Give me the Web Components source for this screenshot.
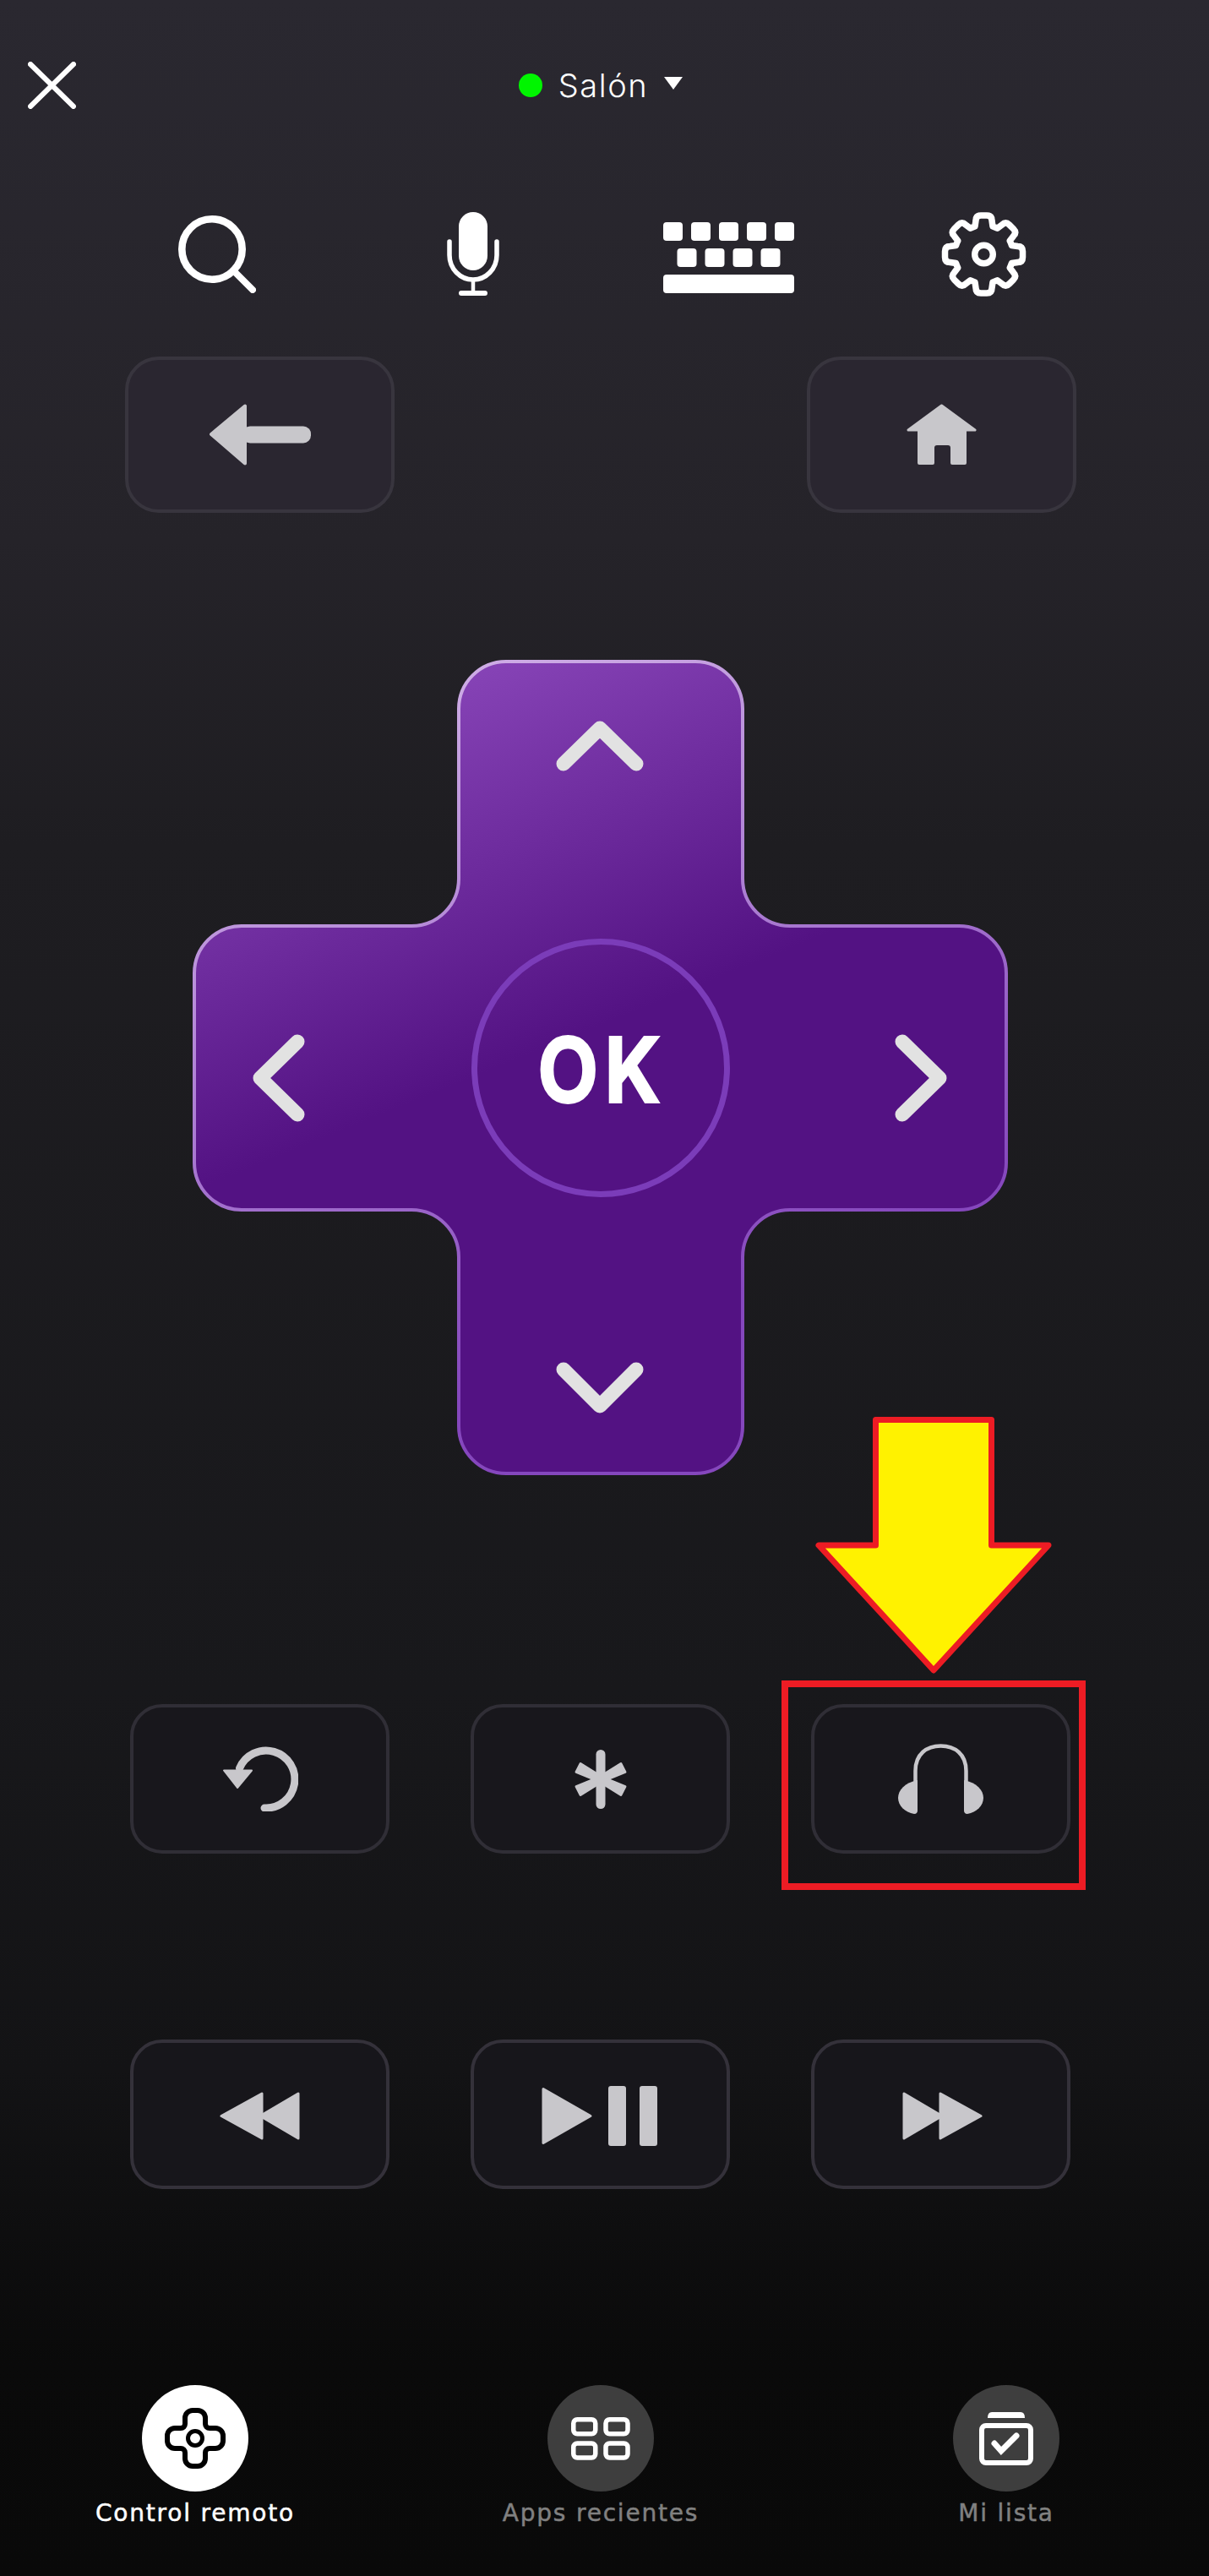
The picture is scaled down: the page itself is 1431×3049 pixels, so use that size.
<!DOCTYPE html>
<html lang="es">
<head>
<meta charset="utf-8">
<title>Control remoto</title>
<style>
  html, body { margin: 0; padding: 0; }
  body {
    width: 1431px;
    height: 3049px;
    position: relative;
    overflow: hidden;
    font-family: "Inter", "Liberation Sans", sans-serif;
    background: linear-gradient(180deg, #2a2830 0, #252329 640px, #1e1d21 1000px, #18181b 2000px, #131315 2450px, #0a0a0a 2800px, #090909 3049px);
  }
</style>
</head>
<body>
  <top-bar device="Salón"></top-bar>

  <quick-actions>
    <remote-icon name="search"></remote-icon>
    <remote-icon name="mic" style="margin-left:226px"></remote-icon>
    <remote-icon name="keyboard" style="margin-left:194px;margin-top:-3px"></remote-icon>
    <remote-icon name="gear" style="margin-left:174px"></remote-icon>
  </quick-actions>

  <nav-keys>
    <key-button tall><remote-icon name="back"></remote-icon></key-button>
    <key-button tall><remote-icon name="home"></remote-icon></key-button>
  </nav-keys>

  <d-pad></d-pad>

  <key-grid>
    <key-button><remote-icon name="replay"></remote-icon></key-button>
    <key-button><remote-icon name="star"></remote-icon></key-button>
    <key-button><remote-icon name="headphones"></remote-icon></key-button>
    <key-button media><remote-icon name="rewind"></remote-icon></key-button>
    <key-button media><remote-icon name="playpause" style="margin-right:2px"></remote-icon></key-button>
    <key-button media><remote-icon name="forward" style="margin-left:3px"></remote-icon></key-button>
  </key-grid>

  <tab-bar>
    <tab-item active icon="tabdpad">Control remoto</tab-item>
    <tab-item icon="apps">Apps recientes</tab-item>
    <tab-item icon="mylist">Mi lista</tab-item>
  </tab-bar>

  <call-out></call-out>

<script>
// builds the outline of the settings gear, 8 teeth with rounded tips
function gearPath() {
  const cx = 50.5, cy = 50;
  const pt = (a, u, v) => {
    const x = cx + u * Math.cos(a) + v * Math.sin(a);
    const y = cy + u * Math.sin(a) - v * Math.cos(a);
    return x.toFixed(2) + ' ' + y.toFixed(2);
  };
  let d = '';
  for (let i = 0; i < 8; i++) {
    const a = i * Math.PI / 4;
    d += (i === 0 ? 'M' : 'A34 34 0 0 1 ') + pt(a, -10.5, 33);
    d += 'L' + pt(a, -9.5, 40) + 'Q' + pt(a, -9.5, 46) + ' ' + pt(a, -3.5, 46);
    d += 'L' + pt(a, 3.5, 46) + 'Q' + pt(a, 9.5, 46) + ' ' + pt(a, 9.5, 40);
    d += 'L' + pt(a, 10.5, 33);
  }
  return d + 'A34 34 0 0 1 ' + pt(0, -10.5, 33) + 'Z';
}

const keyRects = [
  [0, 10], [33, 10], [66, 10], [99, 10], [132, 10],
  [16.5, 41], [49.5, 41], [82.5, 41], [115.5, 41]
].map(k => `<rect x="${k[0]}" y="${k[1]}" width="23" height="22" rx="4"/>`).join('');

// the four flared arms of the star key
const starSpokes = [27, 153, 207, 333]
  .map(r => `<path transform="translate(31 35) rotate(${r})" d="M0 -3L29.7 -5.5V5.5L0 3Z"/>`).join('');

const ICONS = {
  close: [57, 56, `<path d="M3 3L54 53M54 3L3 53" fill="none" stroke="#fff" stroke-width="6" stroke-linecap="round"/>`],
  search: [92, 92, `<circle cx="40" cy="40" r="35.7" fill="none" stroke="#fff" stroke-width="8.6"/><path d="M65 65L88 88" stroke="#fff" stroke-width="8" stroke-linecap="round"/>`],
  mic: [62, 100, `<rect x="14" y="0" width="34" height="69" rx="17" fill="#fff"/><path d="M3 35V51A28 29 0 0 0 59 51V35" fill="none" stroke="#fff" stroke-width="5.5" stroke-linecap="round"/><path d="M31 80V95" stroke="#fff" stroke-width="4.5"/><rect x="14" y="93" width="34" height="6" rx="3" fill="#fff"/>`],
  keyboard: [155, 94, `<g fill="#fff">${keyRects}<rect x="0" y="72" width="155" height="22" rx="4"/></g>`],
  gear: [101, 100, `<path d="${gearPath()}" fill="none" stroke="#fff" stroke-width="7.5" stroke-linejoin="round"/><circle cx="50.5" cy="50" r="10.8" fill="none" stroke="#fff" stroke-width="7.4"/>`],
  back: [121, 73, `<g fill="#c8c7cb"><path d="M3 36L43 2.5V70.5Z" stroke="#c8c7cb" stroke-width="4" stroke-linejoin="round"/><rect x="40" y="26.5" width="81" height="20" rx="9"/></g>`],
  home: [83, 73, `<g fill="#c8c7cb"><path d="M41.5 2L81 31H2Z" stroke="#c8c7cb" stroke-width="3" stroke-linejoin="round"/><path fill-rule="evenodd" d="M13 30H71V70Q71 72 69 72H54Q52 72 52 70V52Q52 49 49 49H36Q33 49 33 52V70Q33 72 31 72H15Q13 72 13 70Z"/></g>`],
  replay: [90, 77, `<path d="M20.5 26A34 34 0 1 1 50 73" fill="none" stroke="#c8c7cb" stroke-width="9" stroke-linecap="round"/><path d="M2 28.5H35L18 49Z" fill="#c8c7cb" stroke="#c8c7cb" stroke-width="2" stroke-linejoin="round"/>`],
  star: [62, 70, `<path d="M31 5.5V64.5" stroke="#c8c7cb" stroke-width="11" stroke-linecap="round"/><g fill="#c8c7cb" stroke="#c8c7cb" stroke-width="3" stroke-linejoin="round">${starSpokes}</g>`],
  headphones: [101, 83, `<path d="M20.5 45V32C20.5 12 34 2.5 50.5 2.5S80.5 12 80.5 32V45" fill="none" stroke="#c8c7cb" stroke-width="4.5"/><g fill="#c8c7cb"><path d="M23 43C8 46 0 55 0 64S8 81 19 83C22 83 23 81 23 79Z"/><path d="M78 43C93 46 101 55 101 64S93 81 82 83C79 83 78 81 78 79Z"/></g>`],
  rewind: [95, 57, `<g fill="#c8c7cb" stroke="#c8c7cb" stroke-width="3" stroke-linejoin="round"><path d="M2 28.5L50 2V55Z"/><path d="M48 28.5L93 2V55Z"/></g>`],
  playpause: [137, 71, `<g fill="#c8c7cb"><path d="M2 3.5L58 35.5L2 67.5Z" stroke="#c8c7cb" stroke-width="3" stroke-linejoin="round"/><rect x="79" y="0" width="21" height="71" rx="3"/><rect x="116" y="0" width="21" height="71" rx="3"/></g>`],
  forward: [95, 57, `<g fill="#c8c7cb" stroke="#c8c7cb" stroke-width="3" stroke-linejoin="round"><path d="M93 28.5L45 2V55Z"/><path d="M47 28.5L2 2V55Z"/></g>`],
  tabdpad: [72, 72, `<path d="M24 12A9 9 0 0 1 33 3H39A9 9 0 0 1 48 12V19A5 5 0 0 0 53 24H60A9 9 0 0 1 69 33V39A9 9 0 0 1 60 48H53A5 5 0 0 0 48 53V60A9 9 0 0 1 39 69H33A9 9 0 0 1 24 60V53A5 5 0 0 0 19 48H12A9 9 0 0 1 3 39V33A9 9 0 0 1 12 24H19A5 5 0 0 0 24 19Z" fill="none" stroke="#000" stroke-width="6"/><circle cx="36" cy="36" r="8.5" fill="none" stroke="#000" stroke-width="5"/>`],
  apps: [70, 51, `<g fill="none" stroke="#fff" stroke-width="5.5"><rect x="2.75" y="2.75" width="26" height="17" rx="4.5"/><rect x="41" y="2.75" width="26" height="17" rx="4.5"/><rect x="2.75" y="31" width="26" height="17" rx="4.5"/><rect x="41" y="31" width="26" height="17" rx="4.5"/></g>`],
  mylist: [64, 63, `<path d="M10 7Q10 0 15 0H49Q54 0 54 7Z" fill="#fff"/><rect x="3" y="16" width="58" height="44" rx="5" fill="none" stroke="#fff" stroke-width="6"/><path d="M18 37L26 46L44 28" fill="none" stroke="#fff" stroke-width="7" stroke-linecap="round" stroke-linejoin="miter"/>`]
};

function iconSvg(name) {
  const ic = ICONS[name];
  return `<svg width="${ic[0]}" height="${ic[1]}" viewBox="0 0 ${ic[0]} ${ic[1]}" style="display:block">${ic[2]}</svg>`;
}

class RemoteIcon extends HTMLElement {
  constructor() {
    super();
    this.attachShadow({ mode: 'open' });
  }
  connectedCallback() {
    this.shadowRoot.innerHTML = `<style>:host { display: block; flex: none; }</style>` + iconSvg(this.getAttribute('name'));
  }
}
customElements.define('remote-icon', RemoteIcon);

class TopBar extends HTMLElement {
  constructor() {
    super();
    this.attachShadow({ mode: 'open' });
    this.shadowRoot.innerHTML = `
      <style>
        :host { display: grid; grid-template-columns: 1fr auto 1fr; align-items: center; padding: 73px 0 0 33px; height: 56px; color: #fff; }
        .device { display: flex; align-items: center; margin-left: -42px; }
        .dot { width: 28px; height: 28px; border-radius: 50%; background: #00f500; margin-right: 19px; }
        .name { font-size: 38px; line-height: 56px; font-weight: 300; letter-spacing: 1.6px; }
        .caret { margin-left: 19px; margin-bottom: 6px; width: 0; height: 0; border-left: 11px solid transparent; border-right: 11px solid transparent; border-top: 15px solid #fff; }
      </style>
      ${iconSvg('close')}
      <div class="device"><span class="dot"></span><span class="name"></span><span class="caret"></span></div>
    `;
  }
  connectedCallback() {
    this.shadowRoot.querySelector('.name').textContent = this.getAttribute('device') || '';
  }
}
customElements.define('top-bar', TopBar);

class QuickActions extends HTMLElement {
  constructor() {
    super();
    this.attachShadow({ mode: 'open' });
    this.shadowRoot.innerHTML = `
      <style>:host { display: flex; align-items: center; height: 102px; margin-top: 121px; padding-left: 211px; }</style>
      <slot></slot>`;
  }
}
customElements.define('quick-actions', QuickActions);

class NavKeys extends HTMLElement {
  constructor() {
    super();
    this.attachShadow({ mode: 'open' });
    this.shadowRoot.innerHTML = `
      <style>:host { display: flex; justify-content: space-between; margin-top: 70px; padding: 0 157px 0 148px; }</style>
      <slot></slot>`;
  }
}
customElements.define('nav-keys', NavKeys);

class KeyButton extends HTMLElement {
  constructor() {
    super();
    this.attachShadow({ mode: 'open' });
    this.shadowRoot.innerHTML = `
      <style>
        :host { display: flex; align-items: center; justify-content: center; box-sizing: border-box; border: 4px solid #302e36; border-radius: 38px; background: #18171c; }
        :host([tall]) { width: 319px; height: 185px; border-radius: 40px; border-color: #38353e; background: #2a2630; }
        :host([media]) { border-color: #34313a; background: #17161b; padding-top: 3px; }
      </style>
      <slot></slot>`;
  }
}
customElements.define('key-button', KeyButton);

class DPad extends HTMLElement {
  constructor() {
    super();
    this.attachShadow({ mode: 'open' });
    this.shadowRoot.innerHTML = `
      <style>
        :host { display: grid; width: 965px; height: 965px; margin: 174px 0 0 228px; }
        svg, .ok { grid-area: 1 / 1; }
        .ok { place-self: center; margin-top: 3px; margin-left: -3px; font: 600 105px/1 "Inter", "Liberation Sans", sans-serif; color: #fff; letter-spacing: 9px; text-indent: 9px; -webkit-text-stroke: 4px #fff; transform: scaleX(0.88); }
      </style>
      <svg width="965" height="965" viewBox="0 0 965 965">
        <defs>
          <linearGradient id="fill" gradientUnits="userSpaceOnUse" x1="315" y1="0" x2="490" y2="430">
            <stop offset="0" stop-color="#8845b8"/><stop offset="1" stop-color="#531283"/>
          </linearGradient>
          <linearGradient id="edge" gradientUnits="userSpaceOnUse" x1="315" y1="0" x2="620" y2="760">
            <stop offset="0" stop-color="#cfaee6"/><stop offset="1" stop-color="#8547bd"/>
          </linearGradient>
        </defs>
        <path d="M315 58A56 56 0 0 1 371 2H595A56 56 0 0 1 651 58V259A56 56 0 0 0 707 315H907A56 56 0 0 1 963 371V595A56 56 0 0 1 907 651H707A56 56 0 0 0 651 707V907A56 56 0 0 1 595 963H371A56 56 0 0 1 315 907V707A56 56 0 0 0 259 651H58A56 56 0 0 1 2 595V371A56 56 0 0 1 58 315H259A56 56 0 0 0 315 259Z" fill="url(#fill)" stroke="url(#edge)" stroke-width="4"/>
        <circle cx="483" cy="483" r="149.5" fill="none" stroke="#7b3cb9" stroke-width="7"/>
        <g fill="none" stroke="#e2e2e2" stroke-width="17" stroke-linecap="round" stroke-linejoin="round">
          <path d="M439 123L482 81L525 123"/>
          <path d="M439 840L482 883L525 840"/>
          <path d="M124 452L80 495L124 538"/>
          <path d="M840 452L884 495L840 538"/>
        </g>
      </svg>
      <span class="ok">OK</span>`;
  }
}
customElements.define('d-pad', DPad);

class KeyGrid extends HTMLElement {
  constructor() {
    super();
    this.attachShadow({ mode: 'open' });
    this.shadowRoot.innerHTML = `
      <style>:host { display: grid; grid-template-columns: repeat(3, 307px); grid-auto-rows: 177px; column-gap: 96px; row-gap: 220px; margin-top: 271px; padding-left: 154px; }</style>
      <slot></slot>`;
  }
}
customElements.define('key-grid', KeyGrid);

class TabBar extends HTMLElement {
  constructor() {
    super();
    this.attachShadow({ mode: 'open' });
    this.shadowRoot.innerHTML = `
      <style>:host { display: flex; gap: 180px; margin-top: 232px; padding-left: 81px; }</style>
      <slot></slot>`;
  }
}
customElements.define('tab-bar', TabBar);

class TabItem extends HTMLElement {
  constructor() {
    super();
    this.attachShadow({ mode: 'open' });
  }
  connectedCallback() {
    this.shadowRoot.innerHTML = `
      <style>
        :host { display: flex; flex-direction: column; align-items: center; width: 300px; color: #808080; }
        :host([active]) { color: #fff; }
        .disc { display: flex; align-items: center; justify-content: center; width: 126px; height: 126px; border-radius: 50%; background: #3e3e3e; }
        :host([active]) .disc { background: #fff; }
        .label { margin-top: 8px; font-family: "DejaVu Sans", "Inter", sans-serif; font-size: 28px; line-height: 36px; font-weight: 400; letter-spacing: 1.8px; -webkit-text-stroke: 0.5px currentColor; white-space: nowrap; }
      </style>
      <div class="disc">${iconSvg(this.getAttribute('icon'))}</div>
      <div class="label"><slot></slot></div>`;
  }
}
customElements.define('tab-item', TabItem);

// the yellow arrow and red frame painted over the screenshot
class CallOut extends HTMLElement {
  constructor() {
    super();
    this.attachShadow({ mode: 'open' });
    this.shadowRoot.innerHTML = `
      <style>:host { position: absolute; left: 925px; top: 1677px; width: 360px; height: 560px; }</style>
      <svg width="360" height="560" viewBox="0 0 360 560" style="display:block">
        <path d="M111.5 3.5H248.5V152H316L180 300L44 152H111.5Z" fill="#fff200" stroke="#ed1c24" stroke-width="7" stroke-linejoin="round"/>
        <rect x="4" y="316" width="352" height="240" fill="none" stroke="#ed1c24" stroke-width="8"/>
      </svg>`;
  }
}
customElements.define('call-out', CallOut);
</script>
</body>
</html>
